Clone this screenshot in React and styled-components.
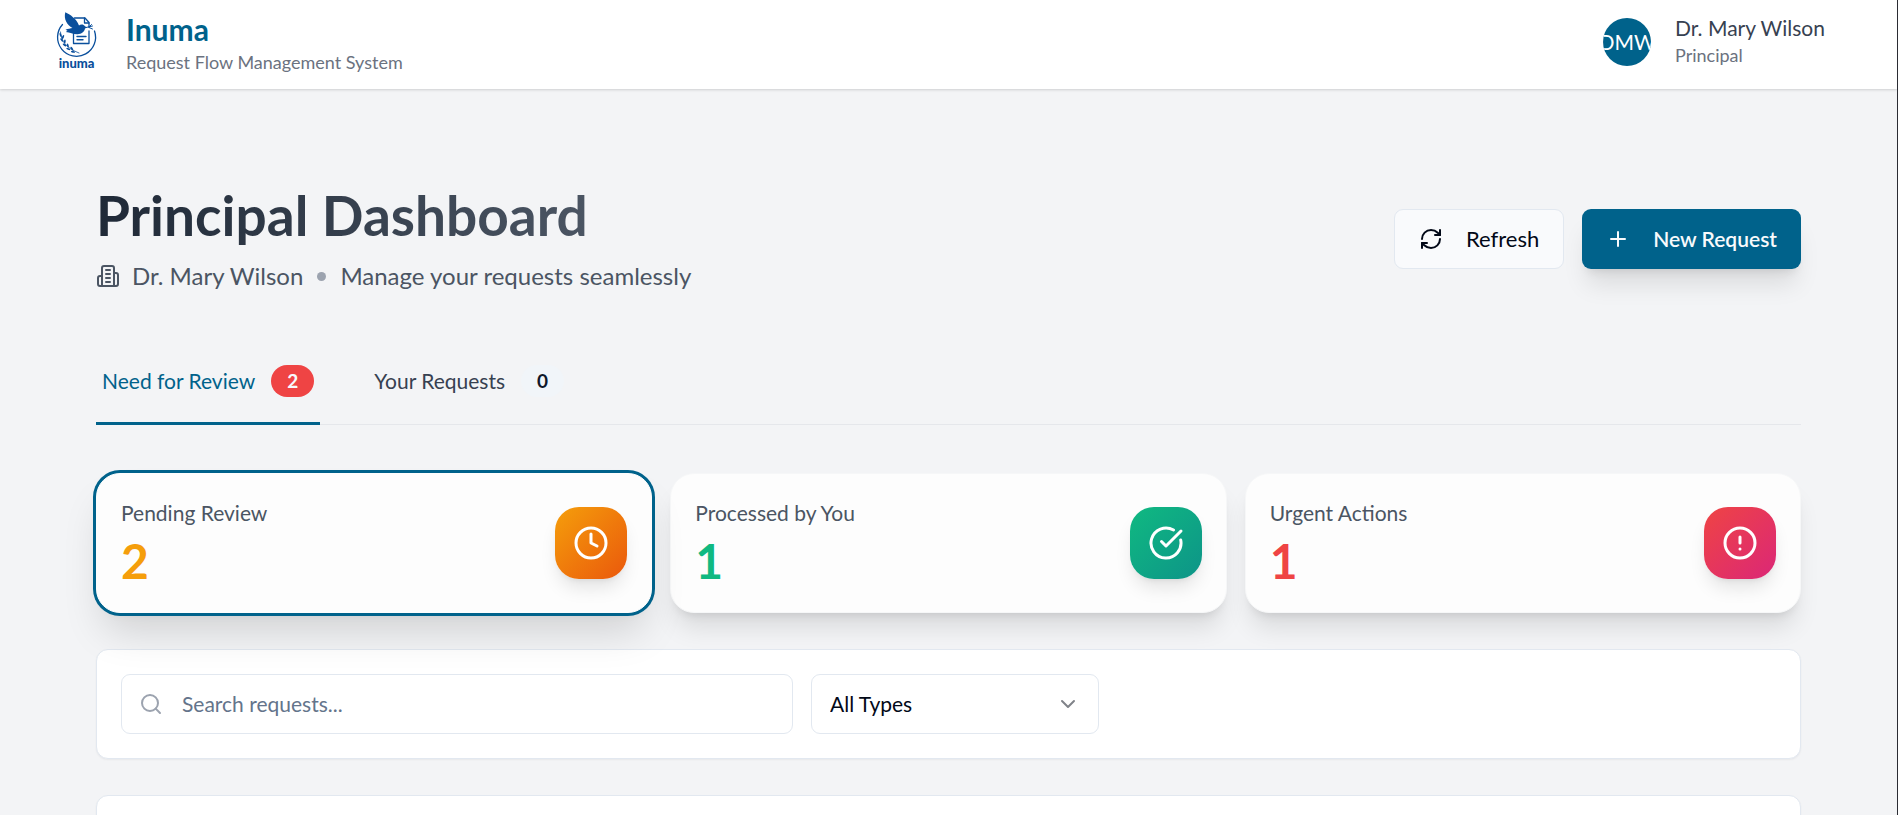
import React from 'react';
import styled, { createGlobalStyle, css } from 'styled-components';
import {
  ChevronDown,
  CircleAlert,
  CircleCheckBig,
  Clock,
  Plus,
  RefreshCw,
  Search,
} from 'lucide-react';

const PRIMARY = '#00628b';
const BORDER = '#e2e8f0';
const RAISED = '0 20px 25px -5px rgba(0, 0, 0, 0.1), 0 8px 10px -6px rgba(0, 0, 0, 0.1)';

const GlobalStyle = createGlobalStyle`
  *, *::before, *::after { box-sizing: border-box; }
  html { background: #f3f4f6; }
  body {
    margin: 0;
    font-family: Lato, "Open Sans", sans-serif;
    font-size: 21px;
    line-height: 30px;
    color: #020817;
    overflow: hidden;
  }
  h1, h2, p { margin: 0; }
  button, input, select { font: inherit; color: inherit; margin: 0; }
  button { cursor: pointer; }
`;

const Page = styled.div`
  height: 100vh;
  overflow: hidden;
  background: #f3f4f6;
  border-right: 1px solid #2b2c33;
`;

const Header = styled.header`
  display: flex;
  align-items: center;
  justify-content: space-between;
  padding: 10px 72px 13px 48px;
  background: #fff;
  box-shadow: 0 1px 3px rgba(0, 0, 0, 0.1), 0 1px 2px rgba(0, 0, 0, 0.06);
`;

const Brand = styled.a`
  display: flex;
  align-items: flex-start;
  gap: 18px;
  color: inherit;
  text-decoration: none;
`;

const BrandName = styled.p`
  font-size: 30px;
  line-height: 38px;
  font-weight: 700;
  color: ${PRIMARY};
`;

const Caption = styled.p`
  padding-top: 1px;
  font-size: 18px;
  line-height: 27px;
  color: #6b7280;
`;

const Profile = styled.div`
  display: flex;
  align-items: center;
  align-self: flex-start;
  gap: 24px;
  height: 63px;
`;

const Avatar = styled.div`
  display: flex;
  align-items: center;
  justify-content: center;
  width: 48px;
  height: 48px;
  border-radius: 50%;
  overflow: hidden;
  background: ${PRIMARY};
  color: #fff;
`;

const ProfileName = styled.p`
  line-height: 27px;
  color: #374151;
`;

const Main = styled.main`
  padding: 95px 96px 48px;
`;

const Hero = styled.section`
  display: flex;
  align-items: center;
  justify-content: space-between;
  margin-bottom: 48px;
`;

const Title = styled.h1`
  width: fit-content;
  font-size: 55px;
  line-height: 62px;
  font-weight: 700;
  color: transparent;
  background: linear-gradient(90deg, #1f2937, #4b5563);
  background-clip: text;
  -webkit-background-clip: text;
`;

const Subtitle = styled.div`
  display: flex;
  align-items: center;
  gap: 12px;
  margin-top: 12px;
  font-size: 24px;
  line-height: 36px;
  color: #4b5563;
`;

const Dot = styled.span`
  width: 9px;
  height: 9px;
  margin: 0 2px;
  border-radius: 50%;
  background: #9ca3af;
`;

const Actions = styled.div`
  display: flex;
  gap: 18px;
`;

const ActionButton = styled.button`
  display: flex;
  align-items: center;
  gap: 23px;
  height: 60px;
  padding: 0 24px;
  border-radius: 9px;
  ${({ $primary }) =>
    $primary
      ? css`
          border: 0;
          background: ${PRIMARY};
          color: #f8fafc;
          font-weight: 600;
          box-shadow: ${RAISED};
        `
      : css`
          border: 1px solid ${BORDER};
          background: #f9fafc;
          font-size: 22px;
        `}
`;

const Tabs = styled.nav`
  display: flex;
  gap: 48px;
  margin-bottom: 48px;
  box-shadow: inset 0 -1px 0 #e5e7eb;
`;

const Tab = styled.button`
  display: flex;
  align-items: center;
  gap: 16px;
  padding: 23px 6px 25px;
  border: 0;
  border-bottom: 3px solid ${({ $active }) => ($active ? PRIMARY : 'transparent')};
  background: none;
  color: ${({ $active }) => ($active ? PRIMARY : '#374151')};
`;

const Badge = styled.span`
  padding: 1px 16px;
  border-radius: 16px;
  font-size: 19px;
  line-height: 30px;
  font-weight: 700;
  background: ${({ $alert }) => ($alert ? '#ef4444' : '#f1f5f9')};
  color: ${({ $alert }) => ($alert ? '#f8fafc' : '#0f172a')};
`;

const Stats = styled.section`
  display: grid;
  grid-template-columns: repeat(3, 1fr);
  gap: 18px;
  margin-bottom: 36px;
`;

const StatCard = styled.button`
  display: flex;
  align-items: center;
  justify-content: space-between;
  padding: 24px;
  border: 1px solid #f6f7f8;
  border-radius: 24px;
  background: #fdfdfd;
  text-align: left;
  box-shadow: ${RAISED};
  ${({ $active }) =>
    $active &&
    css`
      position: relative;
      border-color: #fdfdfd;
      box-shadow: 0 0 0 3px ${PRIMARY}, 0 25px 40px -8px rgba(0, 0, 0, 0.15),
        0 8px 10px -6px rgba(0, 0, 0, 0.05);
    `}
`;

const StatText = styled.span`
  display: flex;
  flex-direction: column;
  gap: 6px;
`;

const StatLabel = styled.span`
  color: #4b5563;
`;

const StatValue = styled.span`
  font-size: 48px;
  line-height: 54px;
  font-weight: 700;
  color: ${({ $color }) => $color};
`;

const StatIcon = styled.span`
  display: flex;
  align-items: center;
  justify-content: center;
  width: 72px;
  height: 72px;
  border-radius: 24px;
  color: #fff;
  background: linear-gradient(135deg, ${({ $from }) => $from}, ${({ $to }) => $to});
  box-shadow: 0 12px 18px -3px rgba(0, 0, 0, 0.1), 0 4px 6px -4px rgba(0, 0, 0, 0.1);
`;

const Panel = styled.section`
  display: flex;
  gap: 18px;
  min-height: 110px;
  margin-bottom: 36px;
  padding: 24px;
  border: 1px solid ${BORDER};
  border-radius: 12px;
  background: #fff;
  box-shadow: 0 1px 2px rgba(0, 0, 0, 0.05);
`;

const SearchField = styled.label`
  display: flex;
  align-items: center;
  gap: 19px;
  flex: 1;
  max-width: 672px;
  height: 60px;
  padding: 0 17px;
  border: 1px solid ${BORDER};
  border-radius: 9px;
  color: #9ca3af;
`;

const SearchInput = styled.input`
  flex: 1;
  min-width: 0;
  padding: 0;
  border: 0;
  outline: 0;
  background: none;
  color: #020817;
  &::placeholder { color: #64748b; opacity: 1; }
`;

const SelectField = styled.div`
  position: relative;
  width: 288px;
  color: #808389;
  svg {
    position: absolute;
    top: 18px;
    right: 19px;
    pointer-events: none;
  }
`;

const TypeSelect = styled.select`
  appearance: none;
  width: 100%;
  height: 60px;
  padding: 0 48px 0 18px;
  border: 1px solid ${BORDER};
  border-radius: 9px;
  background: #fff;
  color: #020817;
`;

function Logo() {
  return (
    <svg width="60" height="60" viewBox="0 0 60 60" role="img" aria-label="inuma">
      <g fill="none" stroke="#0a4f9c" strokeWidth="1.3" strokeLinecap="round" strokeLinejoin="round">
        <path d="M14.500 14.500A19 19 0 1 0 46.500 21" />
        <path d="M25.500 23V33.500H41V21M41 17V12.500L37 8H26.500" />
        <path d="M36.500 8V13H41" />
        <path d="M29 26.500H38M29 29.800H35" strokeWidth="1.400" />
        <path d="M38 17.500L44.500 16M41 17l2.500-2.500M41 17.500l3.500 1.500" strokeWidth="1" />
        <path d="M12.500 22C13 31 18 38 31 43" strokeWidth="0.800" />
      </g>
      <g fill="#0a4f9c">
        <path d="M17.300 2.200C22 4.500 28.500 8.500 31 15.500C32.500 14.200 35.500 14 37 16.200L39 17.500L37 18.500C36.500 22 33 24.500 29 24.200C25 24.200 22 22.500 17.800 22L19.500 20.800L17.500 19.800C20 18.700 22.500 18.500 24.500 18C19 15 15.500 9 17.300 2.200Z" />
        <ellipse cx="12.600" cy="25" rx="0.900" ry="2.100" transform="rotate(-20 12.600 25)" />
        <ellipse cx="15" cy="27" rx="0.900" ry="2.100" transform="rotate(25 15 27)" />
        <ellipse cx="13.800" cy="30" rx="0.900" ry="2.100" transform="rotate(-40 13.800 30)" />
        <ellipse cx="16.800" cy="31.500" rx="0.900" ry="2.100" transform="rotate(5 16.800 31.500)" />
        <ellipse cx="16.500" cy="35" rx="0.900" ry="2.100" transform="rotate(-55 16.500 35)" />
        <ellipse cx="19.800" cy="35.500" rx="0.900" ry="2.100" transform="rotate(-15 19.800 35.500)" />
        <ellipse cx="20.300" cy="39" rx="0.900" ry="2.100" transform="rotate(-70 20.300 39)" />
        <ellipse cx="23.800" cy="38.600" rx="0.900" ry="2.100" transform="rotate(-35 23.800 38.600)" />
        <ellipse cx="25" cy="41.800" rx="0.900" ry="2.100" transform="rotate(-80 25 41.800)" />
      </g>
      <text x="28.500" y="58" textAnchor="middle" fontFamily="Lato, sans-serif" fontSize="13" fontWeight="900" fill="#0a4f9c">
        inuma
      </text>
    </svg>
  );
}

function BuildingIcon() {
  return (
    <svg
      width="24"
      height="24"
      viewBox="0 0 24 24"
      fill="none"
      stroke="currentColor"
      strokeWidth="2"
      strokeLinecap="round"
      strokeLinejoin="round"
      aria-hidden="true"
    >
      <path d="M6 22V4a2 2 0 0 1 2-2h8a2 2 0 0 1 2 2v18Z" />
      <path d="M6 12H4a2 2 0 0 0-2 2v6a2 2 0 0 0 2 2h2" />
      <path d="M18 9h2a2 2 0 0 1 2 2v9a2 2 0 0 1-2 2h-2" />
      <path d="M10 6h4M10 10h4M10 14h4M10 18h4" />
    </svg>
  );
}

const stats = [
  { label: 'Pending Review', value: 2, color: '#f59e0b', from: '#f59e0b', to: '#ea580c', Icon: Clock, active: true },
  { label: 'Processed by You', value: 1, color: '#10b981', from: '#10b981', to: '#0d9488', Icon: CircleCheckBig },
  { label: 'Urgent Actions', value: 1, color: '#ef4444', from: '#ef4444', to: '#db2777', Icon: CircleAlert },
];

export default function App() {
  return (
    <Page>
      <GlobalStyle />
      <Header>
        <Brand href="#">
          <Logo />
          <div>
            <BrandName>Inuma</BrandName>
            <Caption>Request Flow Management System</Caption>
          </div>
        </Brand>
        <Profile>
          <Avatar>DMW</Avatar>
          <div>
            <ProfileName>Dr. Mary Wilson</ProfileName>
            <Caption>Principal</Caption>
          </div>
        </Profile>
      </Header>
      <Main>
        <Hero>
          <div>
            <Title>Principal Dashboard</Title>
            <Subtitle>
              <BuildingIcon />
              <span>Dr. Mary Wilson</span>
              <Dot />
              <span>Manage your requests seamlessly</span>
            </Subtitle>
          </div>
          <Actions>
            <ActionButton type="button">
              <RefreshCw size={24} />
              Refresh
            </ActionButton>
            <ActionButton type="button" $primary>
              <Plus size={24} />
              New Request
            </ActionButton>
          </Actions>
        </Hero>
        <Tabs aria-label="Requests">
          <Tab type="button" $active>
            Need for Review
            <Badge $alert>2</Badge>
          </Tab>
          <Tab type="button">
            Your Requests
            <Badge>0</Badge>
          </Tab>
        </Tabs>
        <Stats>
          {stats.map(({ label, value, color, from, to, Icon, active }) => (
            <StatCard key={label} type="button" $active={active}>
              <StatText>
                <StatLabel>{label}</StatLabel>
                <StatValue $color={color}>{value}</StatValue>
              </StatText>
              <StatIcon $from={from} $to={to}>
                <Icon size={36} />
              </StatIcon>
            </StatCard>
          ))}
        </Stats>
        <Panel>
          <SearchField>
            <Search size={24} />
            <SearchInput type="text" placeholder="Search requests..." aria-label="Search requests" />
          </SearchField>
          <SelectField>
            <TypeSelect aria-label="Request type" defaultValue="all">
              <option value="all">All Types</option>
            </TypeSelect>
            <ChevronDown size={24} />
          </SelectField>
        </Panel>
        <Panel />
      </Main>
    </Page>
  );
}
